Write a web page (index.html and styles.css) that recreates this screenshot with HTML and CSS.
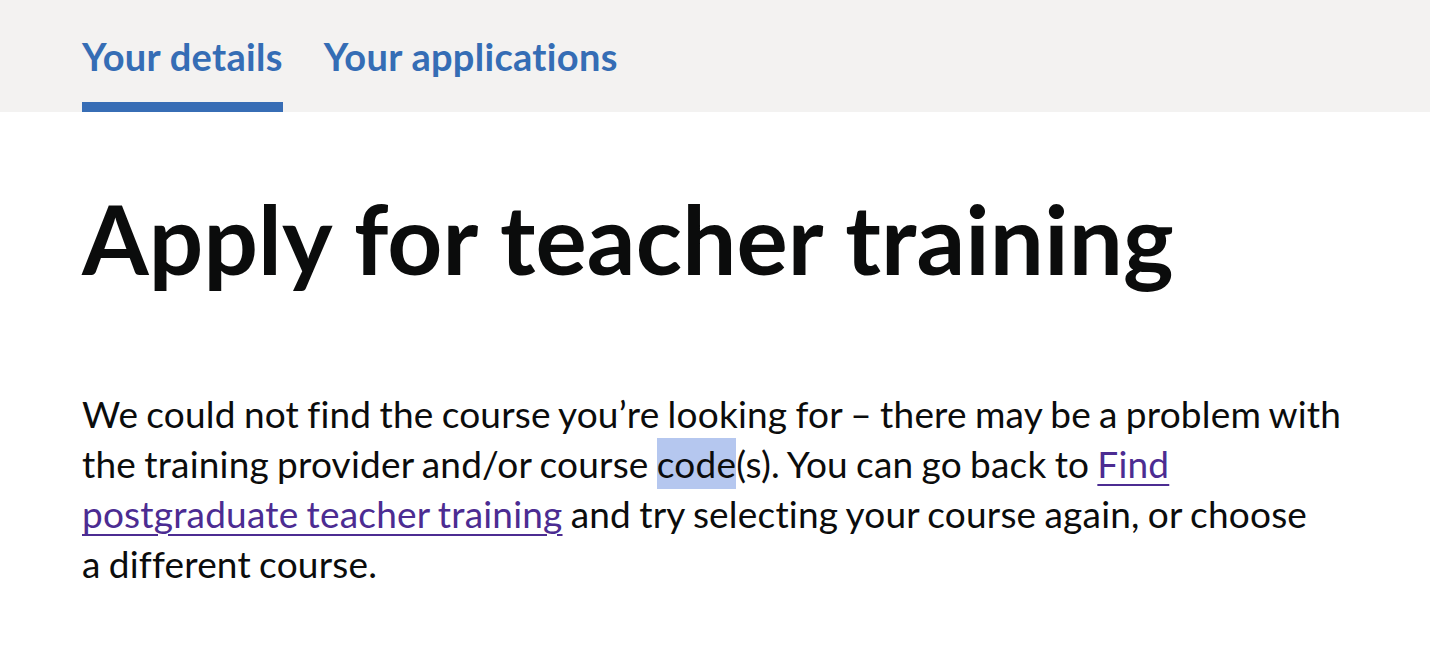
FILE: index.html
```html
<!DOCTYPE html>
<html lang="en">
<head>
<meta charset="utf-8">
<title>Apply for teacher training</title>
<link rel="stylesheet" href="styles.css">
</head>
<body>
<nav class="subnav">
  <ul class="subnav__list">
    <li class="subnav__item subnav__item--active">
      <a class="subnav__link" href="#">Your details</a>
      <span class="subnav__bar"></span>
    </li>
    <li class="subnav__item">
      <a class="subnav__link" href="#">Your applications</a>
      <span class="subnav__bar subnav__bar--hidden"></span>
    </li>
  </ul>
</nav>
<main class="main">
  <h1 class="heading">Apply for teacher training</h1>
  <p class="body">We could not find the course you’re looking for – there may be a problem with the training provider and/or course <span class="selected">code</span>(s). You can go back to <a class="link" href="#">Find postgraduate teacher training</a> and try selecting your course again, or choose a&nbsp;different course.</p>
</main>
</body>
</html>
```
FILE: styles.css
```css
html, body {
  margin: 0;
  padding: 0;
  background: #ffffff;
}
body {
  font-family: Lato, "Noto Sans", sans-serif;
  color: #0b0c0c;
}
.subnav {
  background: #f3f2f1;
  height: 112px;
}
.subnav__list {
  list-style: none;
  margin: 0;
  padding: 0 0 0 82px;
  display: flex;
  gap: 41px;
}
.subnav__item {
  display: flex;
  flex-direction: column;
  padding-top: 37px;
}
.subnav__link {
  font-weight: 700;
  font-size: 38px;
  line-height: 38px;
  letter-spacing: 0.3px;
  color: #356db5;
  text-decoration: none;
}
.subnav__bar {
  display: block;
  height: 10px;
  margin-top: 27px;
  background: #376db5;
}
.subnav__bar--hidden {
  background: transparent;
}
.main {
  padding: 0 82px;
}
.heading {
  margin: 78px 0 0;
  font-weight: 700;
  font-size: 96px;
  line-height: 96px;
  letter-spacing: 0.15px;
  color: #0b0c0c;
}
.body {
  margin: 103px 0 0;
  width: 1272px;
  font-size: 37px;
  line-height: 50px;
  letter-spacing: 0.2px;
  word-spacing: -1.5px;
  color: #0b0c0c;
}
.selected {
  padding: 3px 0;
  background: #b5c7ef;
}
.link {
  color: #4c2c92;
  text-decoration: underline;
  text-decoration-thickness: 2px;
  text-underline-offset: 6px;
}
```
